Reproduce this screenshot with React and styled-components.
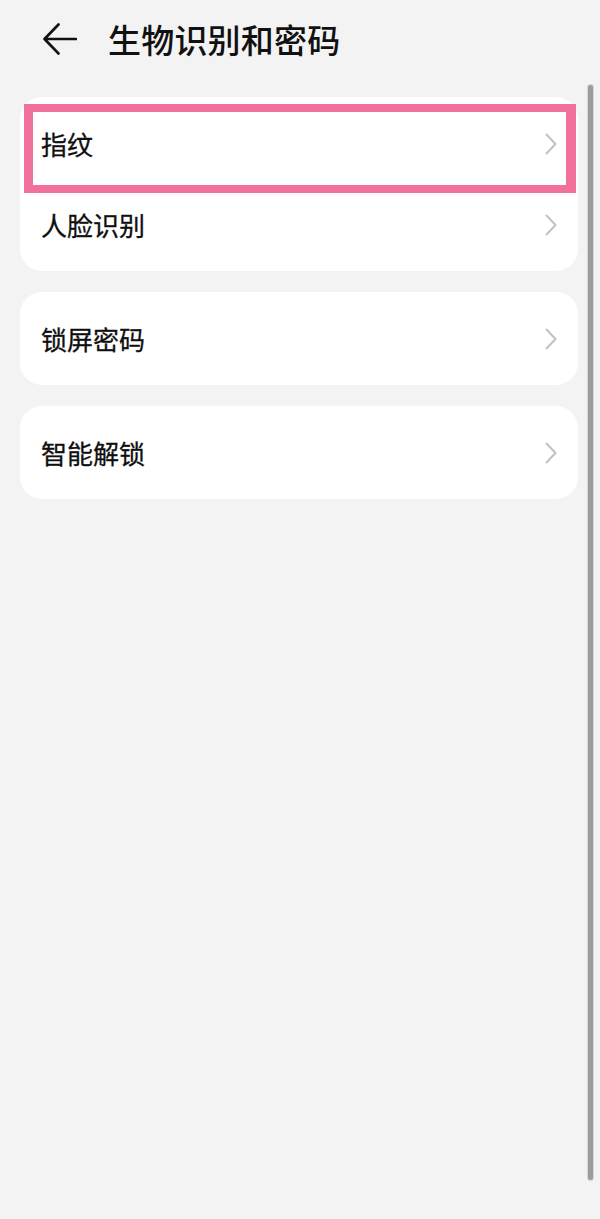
import React from 'react';
import styled, { createGlobalStyle } from 'styled-components';

const Global = createGlobalStyle`
  html, body {
    margin: 0;
    padding: 0;
    background: #f3f3f3;
  }
  body {
    font-family: "Noto Sans CJK SC", "Noto Sans", sans-serif;
    color: #1a1a1a;
  }
`;

const Page = styled.div`
  position: relative;
  width: 600px;
  height: 1219px;
  background: #f3f3f3;
  overflow: hidden;
`;

const Header = styled.div`
  display: flex;
  align-items: center;
  height: 78px;
  padding-left: 43px;
  box-sizing: border-box;
`;

const BackButton = styled.div`
  width: 34px;
  height: 32px;
  display: flex;
  align-items: center;
  margin-right: 31px;
`;

const Title = styled.h1`
  margin: 0;
  font-size: 33px;
  font-weight: 500;
  letter-spacing: 0.2px;
  color: #111;
`;

const List = styled.div`
  display: flex;
  flex-direction: column;
  gap: 21px;
  padding: 19px 22px 0 20px;
`;

const Card = styled.div`
  background: #fff;
  border-radius: 22px;
  padding: 6px 0;
`;

const Row = styled.div`
  position: relative;
  display: flex;
  align-items: center;
  justify-content: space-between;
  height: 81px;
  padding: 0 20px 0 21px;
`;

const Label = styled.span`
  font-size: 26px;
  font-weight: 400;
  color: #0f0f0f;
  -webkit-text-stroke: 0.3px #0f0f0f;
`;

const Highlight = styled.div`
  position: absolute;
  left: 4px;
  right: 2px;
  top: 1px;
  bottom: -9px;
  border: 8px solid #f2719b;
  border-left-width: 9px;
  border-right-width: 10px;
  pointer-events: none;
`;

const ScrollBar = styled.div`
  position: absolute;
  right: 7px;
  top: 85px;
  width: 5px;
  height: 1095px;
  border-radius: 3px;
  background: #9c9c9c;
  box-shadow: 0 0 0 1px #d6d6d6;
`;

const Chevron = () => (
  <svg width="14" height="22" viewBox="0 0 14 22" style={{ marginTop: 1 }}>
    <path d="M2.5 1.5 L11.5 11 L2.5 20.5" fill="none" stroke="#c2c2c2" strokeWidth="2" strokeLinecap="round" strokeLinejoin="round" />
  </svg>
);

const Item = ({ label, highlighted }) => (
  <Row>
    <Label>{label}</Label>
    <Chevron />
    {highlighted && <Highlight />}
  </Row>
);

const groups = [
  [{ label: '指纹', highlighted: true }, { label: '人脸识别' }],
  [{ label: '锁屏密码' }],
  [{ label: '智能解锁' }],
];

export default function App() {
  return (
    <Page>
      <Global />
      <Header>
        <BackButton>
          <svg width="34" height="32" viewBox="0 0 34 32">
            <path d="M15.5 1.5 L1.5 16 L15.5 30.5 M1.5 16 H33" fill="none" stroke="#111" strokeWidth="2.6" strokeLinecap="round" strokeLinejoin="round" />
          </svg>
        </BackButton>
        <Title>生物识别和密码</Title>
      </Header>
      <List>
        {groups.map((items, i) => (
          <Card key={i}>
            {items.map((it) => (
              <Item key={it.label} {...it} />
            ))}
          </Card>
        ))}
      </List>
      <ScrollBar />
    </Page>
  );
}
